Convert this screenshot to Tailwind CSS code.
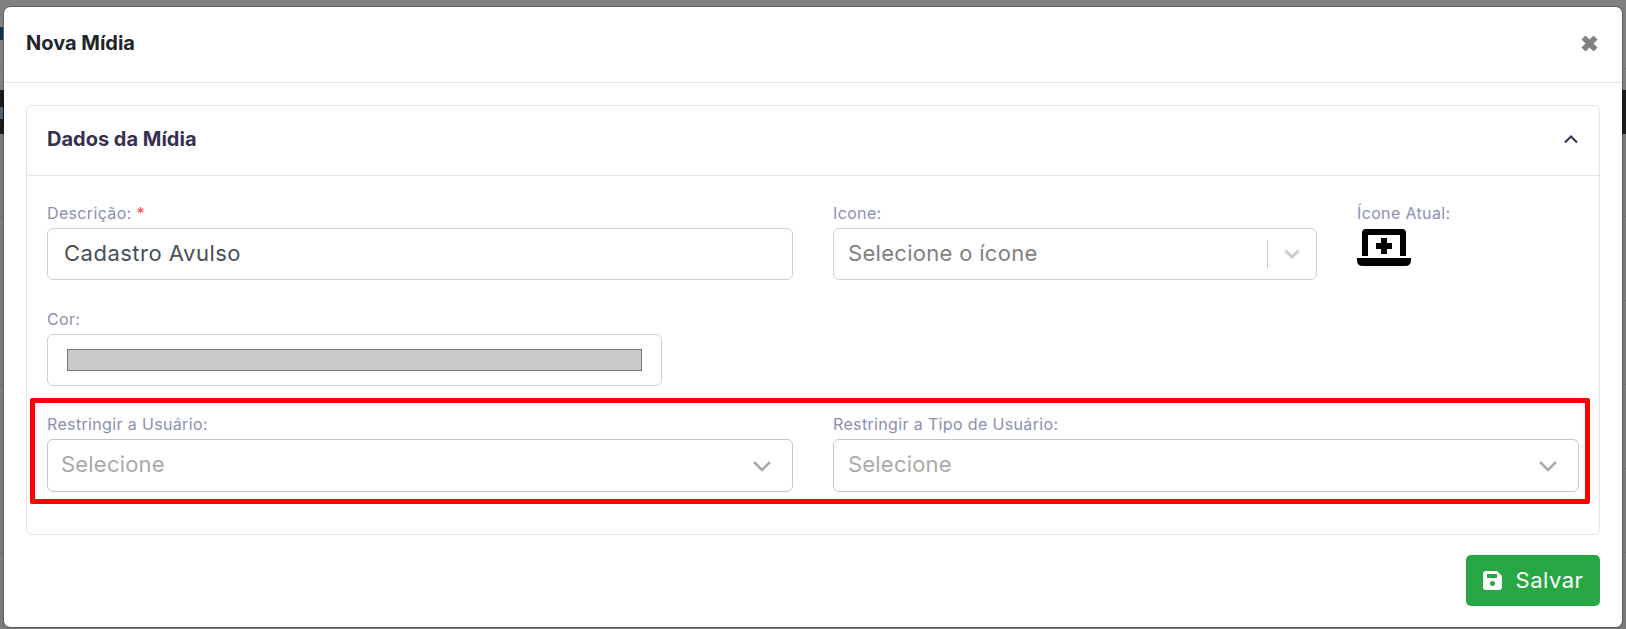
<!DOCTYPE html>
<html lang="pt-BR">
<head>
  <meta charset="UTF-8" />
  <title>Nova Mídia</title>
  <script src="https://cdn.jsdelivr.net/npm/@tailwindcss/browser@4"></script>
</head>
<body class="relative bg-[#808080] h-[629px] overflow-hidden font-['Inter','Noto_Sans',sans-serif]">

  <!-- Page behind the modal, dimmed -->
  <div class="absolute inset-0 flex flex-col">
    <div class="h-[69px] border-b border-[#747474] shrink-0 pt-[27px]">
      <div class="w-[3px] h-[13px] bg-[#14304f]"></div>
    </div>
    <div class="h-[21px] shrink-0"></div>
    <div class="h-[44px] bg-[#1b1c1e] shrink-0 pt-[17px]">
      <div class="w-[3px] h-[12px] bg-[#52606e]"></div>
    </div>
    <div class="h-[83px] border-b border-[#6e6e6e] bg-[#7a7a7a] shrink-0"></div>
    <div class="h-[84px] border-b border-[#6e6e6e] bg-[#7a7a7a] shrink-0"></div>
    <div class="h-[84px] border-b border-[#6e6e6e] bg-[#7a7a7a] shrink-0"></div>
    <div class="h-[84px] border-b border-[#6e6e6e] bg-[#7a7a7a] shrink-0"></div>
    <div class="h-[84px] border-b border-[#6e6e6e] bg-[#7a7a7a] shrink-0"></div>
    <div class="flex-1 bg-[#7a7a7a]"></div>
  </div>

  <!-- Modal -->
  <div class="relative mt-[6px] mx-[3px] h-[622px] bg-white bg-clip-padding border border-black/25 rounded-[7px] flex flex-col">

    <!-- Header -->
    <div class="h-[76px] shrink-0 border-b border-[#e4e4ec] pl-[22px] pr-[24px] pb-[3px] flex items-center justify-between">
      <h1 class="text-[20px] font-bold text-[#212529]">Nova Mídia</h1>
      <svg class="w-[17px] h-[17px]" viewBox="0 0 17 17"><path d="M1 4.5 4.5 1 8.5 5 12.5 1 16 4.5 12 8.5 16 12.5 12.5 16 8.5 12 4.5 16 1 12.5 5 8.5Z" fill="#808080" stroke="#808080" stroke-linejoin="round"/></svg>
    </div>

    <div class="px-[22px] pt-[22px] flex flex-col">
      <!-- Card -->
      <div class="h-[430px] border border-[#e3e3e8] rounded-[6px]">
        <div class="h-[70px] border-b border-[#e3e3e8] px-[20px] pb-[3px] flex items-center justify-between">
          <h2 class="text-[20px] font-bold text-[#35304f]">Dados da Mídia</h2>
          <svg class="w-[16px] h-[10px]" viewBox="0 0 16 10"><path d="M2 8.5 8 2.5 14 8.5" fill="none" stroke="#35304f" stroke-width="2"/></svg>
        </div>

        <div class="px-[20px] pt-[27px]">
          <div class="flex gap-[40px]">
            <div class="w-[746px]">
              <label class="block h-[25px] text-[16px] tracking-[0.35px] leading-[20px] text-[#8c8fb3]">Descrição: <span class="text-[#f44]">*</span></label>
              <div class="h-[52px] border border-[#ced0da] rounded-[6px] flex items-center pl-[16px] pb-[2px] text-[22px] tracking-[0.5px] text-[#495057]">Cadastro Avulso</div>
            </div>
            <div class="w-[484px]">
              <label class="block h-[25px] text-[16px] tracking-[0.35px] leading-[20px] text-[#8c8fb3]">Icone:</label>
              <div class="h-[52px] border border-[#ced0da] rounded-[6px] flex items-center pl-[14px] text-[22px] tracking-[0.3px] text-[#808080]">
                <span class="flex-1 pb-[2px]">Selecione o ícone</span>
                <span class="w-px h-[28px] bg-[#ccc]"></span>
                <svg class="w-[16px] h-[10px] mx-[16px]" viewBox="0 0 16 10"><path d="M1.5 1.5 8 8 14.5 1.5" fill="none" stroke="#ccc" stroke-width="3"/></svg>
              </div>
            </div>
            <div>
              <label class="block h-[25px] text-[16px] tracking-[0.35px] leading-[20px] text-[#8c8fb3]">Ícone Atual:</label>
              <svg class="w-[54px] h-[39px]" viewBox="0 0 54 39"><path d="M5 28V5Q5 1 9 1H45Q49 1 49 5V28H43V7H11V28ZM0 30H54V32Q54 38 48 38H6Q0 38 0 32ZM24 10H30V15H35V21H30V26H24V21H19V15H24Z" fill="#000"/></svg>
            </div>
          </div>

          <div class="mt-[29px]">
            <label class="block h-[25px] text-[16px] tracking-[0.35px] leading-[20px] text-[#8c8fb3]">Cor:</label>
            <div class="w-[615px] h-[52px] border border-[#ced0da] rounded-[6px] flex items-center pl-[19px]">
              <div class="w-[575px] h-[22px] bg-[#c9c9c9] border border-[#777]"></div>
            </div>
          </div>

          <!-- Highlighted restriction fields -->
          <div class="mt-[12px] -ml-[17px] w-[1560px] h-[106px] border-[5px] border-[#ff0000] rounded-[2px] pl-[12px] pt-[11px] flex gap-[40px]">
            <div class="w-[746px]">
              <label class="block h-[25px] text-[16px] tracking-[0.35px] leading-[20px] text-[#8c8fb3]">Restringir a Usuário:</label>
              <div class="h-[53px] border border-[#c6c6c6] rounded-[6px] flex items-center justify-between pl-[13px] pr-[20px] text-[22px] tracking-[0.2px] text-[#aaa]">
                <span class="pb-[2px]">Selecione</span>
                <svg class="w-[20px] h-[12px]" viewBox="0 0 20 12"><path d="M2 2 10 10 18 2" fill="none" stroke="#aaa" stroke-width="2.5"/></svg>
              </div>
            </div>
            <div class="w-[746px]">
              <label class="block h-[25px] text-[16px] tracking-[0.35px] leading-[20px] text-[#8c8fb3]">Restringir a Tipo de Usuário:</label>
              <div class="h-[53px] border border-[#c6c6c6] rounded-[6px] flex items-center justify-between pl-[14px] pr-[20px] text-[22px] tracking-[0.2px] text-[#aaa]">
                <span class="pb-[2px]">Selecione</span>
                <svg class="w-[20px] h-[12px]" viewBox="0 0 20 12"><path d="M2 2 10 10 18 2" fill="none" stroke="#aaa" stroke-width="2.5"/></svg>
              </div>
            </div>
          </div>
        </div>
      </div>

      <!-- Footer -->
      <div class="flex justify-end mt-[20px]">
        <button class="w-[134px] h-[51px] bg-[#28a745] rounded-[5px] text-white text-[22px] tracking-[0.5px] flex items-center justify-center gap-[14px]">
          <svg class="w-[19px] h-[19px]" viewBox="0 0 19 19"><path d="M3 0H14L19 5V16Q19 19 16 19H3Q0 19 0 16V3Q0 0 3 0ZM4 3V7H14V3ZM9.5 10A2.5 2.5 0 1 0 9.5 15 2.5 2.5 0 1 0 9.5 10Z" fill="#fff" fill-rule="evenodd"/></svg>
          Salvar
        </button>
      </div>
    </div>
  </div>
</body>
</html>
